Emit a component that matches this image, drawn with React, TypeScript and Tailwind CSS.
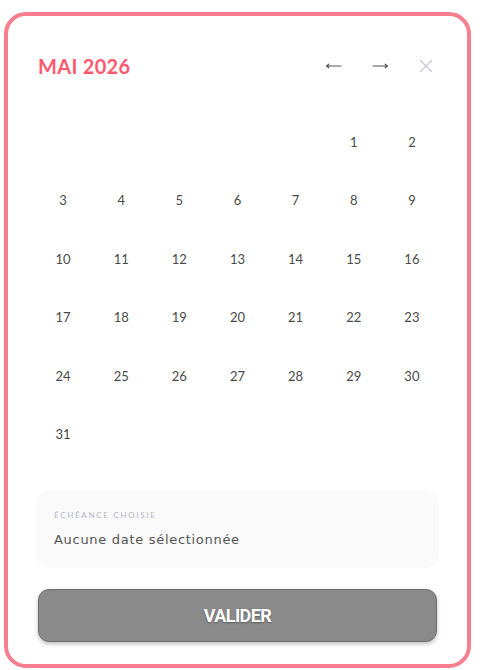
import React from "react";

const days: (number | null)[] = [
  null, null, null, null, null, 1, 2,
  3, 4, 5, 6, 7, 8, 9,
  10, 11, 12, 13, 14, 15, 16,
  17, 18, 19, 20, 21, 22, 23,
  24, 25, 26, 27, 28, 29, 30,
  31,
];

export default function App() {
  return (
    <div className="w-[480px] h-[670px] bg-white pl-[4px] pt-[12px]" style={{ fontFamily: "Lato, 'Noto Sans', sans-serif" }}>
      <div className="w-[467px] h-[656px] border-[4px] border-[#f77e8d] rounded-[22px] bg-white flex flex-col px-[26px] pt-[30px] pb-[22px]">
        <div className="flex items-center h-[40px]">
          <div className="ml-[4px] text-[20px] font-bold text-[#ff5a70] tracking-[0.3px]">MAI 2026</div>
          <div className="ml-auto flex items-center gap-[30px] mr-[8px]">
            <svg width="17" height="10" viewBox="0 0 17 10" fill="none" stroke="#555" strokeWidth="1.1" strokeLinecap="round" strokeLinejoin="round">
              <path d="M16 5H1.5M3.8 3.2L1.5 5l2.3 1.8" />
            </svg>
            <svg width="17" height="10" viewBox="0 0 17 10" fill="none" stroke="#555" strokeWidth="1.1" strokeLinecap="round" strokeLinejoin="round">
              <path d="M1 5h14.5M13.2 3.2L15.5 5l-2.3 1.8" />
            </svg>
            <svg width="14" height="14" viewBox="0 0 14 14" fill="none" stroke="#c5c5d0" strokeWidth="1.1" strokeLinecap="round">
              <path d="M1.5 1.5l11 11M12.5 1.5l-11 11" />
            </svg>
          </div>
        </div>
        <div className="grid grid-cols-7 mt-[27px]">
          {days.map((d, i) => (
            <div key={i} className="h-[58.5px] flex items-center justify-center text-[13px] text-[#4a4a4a]">
              {d ?? ""}
            </div>
          ))}
        </div>
        <div className="mt-auto mx-[2px] h-[78px] rounded-[14px] bg-[#fafafb] flex flex-col justify-center px-[18px]">
          <div className="text-[8px] tracking-[1.7px] text-[#b4b4c6] uppercase">ÉCHÉANCE CHOISIE</div>
          <div className="mt-[9px] text-[13px] tracking-[0.7px] text-[#555]" style={{ fontFamily: "'DejaVu Sans', sans-serif" }}>Aucune date sélectionnée</div>
        </div>
        <button className="mt-[21px] mx-[4px] h-[53px] rounded-[11px] bg-[#8a8a8a] border border-[#6e6e6e] shadow-[0_2px_4px_rgba(0,0,0,0.25)] flex items-center justify-center">
          <span className="text-white text-[18px] font-bold tracking-[-0.6px] [text-shadow:0_1px_2px_rgba(0,0,0,0.35)]" style={{ fontFamily: "Roboto, 'Liberation Sans', sans-serif" }}>VALIDER</span>
        </button>
      </div>
    </div>
  );
}
